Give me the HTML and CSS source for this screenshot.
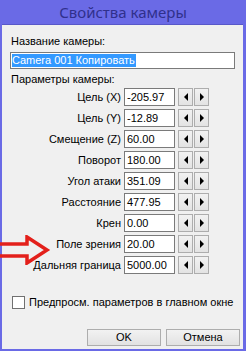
FILE: index.html
```html
<!DOCTYPE html>
<html lang="ru">
<head>
<meta charset="utf-8">
<link rel="stylesheet" href="styles.css">
</head>
<body>
<div class="window">
  <div class="title">Свойства камеры</div>
  <div class="client">
    <div class="label">Название камеры:</div>
    <div class="name-field"><span class="sel">Camera 001 Копировать</span></div>
    <div class="label params">Параметры камеры:</div>
    <div class="rows">
      <div class="row"><span class="rlabel">Цель (X)</span><span class="field">-205.97</span><span class="spin"><span class="tri left"></span></span><span class="spin"><span class="tri right"></span></span></div>
      <div class="row"><span class="rlabel">Цель (Y)</span><span class="field">-12.89</span><span class="spin"><span class="tri left"></span></span><span class="spin"><span class="tri right"></span></span></div>
      <div class="row"><span class="rlabel">Смещение (Z)</span><span class="field">60.00</span><span class="spin"><span class="tri left"></span></span><span class="spin"><span class="tri right"></span></span></div>
      <div class="row"><span class="rlabel">Поворот</span><span class="field">180.00</span><span class="spin"><span class="tri left"></span></span><span class="spin"><span class="tri right"></span></span></div>
      <div class="row"><span class="rlabel">Угол атаки</span><span class="field">351.09</span><span class="spin"><span class="tri left"></span></span><span class="spin"><span class="tri right"></span></span></div>
      <div class="row"><span class="rlabel">Расстояние</span><span class="field">477.95</span><span class="spin"><span class="tri left"></span></span><span class="spin"><span class="tri right"></span></span></div>
      <div class="row"><span class="rlabel">Крен</span><span class="field">0.00</span><span class="spin"><span class="tri left"></span></span><span class="spin"><span class="tri right"></span></span></div>
      <div class="row"><span class="rlabel">Поле зрения</span><span class="field">20.00</span><span class="spin"><span class="tri left"></span></span><span class="spin"><span class="tri right"></span></span></div>
      <div class="row"><span class="rlabel">Дальняя граница</span><span class="field">5000.00</span><span class="spin"><span class="tri left"></span></span><span class="spin"><span class="tri right"></span></span></div>
    </div>
    <div class="check"><span class="box"></span><span>Предпросм. параметров в главном окне</span></div>
    <div class="buttons"><span class="btn">OK</span><span class="btn">Отмена</span></div>
    <svg class="arrow" width="52" height="30" viewBox="0 0 52 30">
      <path d="M-4 9 H27 V2 L47 15 L27 28 V21 H-4 Z" fill="none" stroke="#e3201b" stroke-width="3.5" stroke-linejoin="miter"/>
    </svg>
  </div>
</div>
</body>
</html>
```
FILE: styles.css
```css
* { box-sizing: border-box; }
html, body { margin: 0; padding: 0; }
body {
  width: 246px;
  height: 351px;
  background: #6a6ae6;
  font-family: "Liberation Sans", Arial, sans-serif;
  font-size: 11px;
  color: #000;
  overflow: hidden;
}
.window {
  width: 246px;
  height: 351px;
  padding: 0 3px 2px 2px;
  display: flex;
  flex-direction: column;
}
.title {
  height: 24px;
  line-height: 24px;
  text-align: center;
  font-family: "Noto Sans", "Open Sans", sans-serif;
  font-size: 15px;
  color: #30308c;
  padding-left: 1px;
}
.client {
  position: relative;
  flex: 1;
  background: #f0f0f0;
  padding: 9px 0 0 0;
  border-top: 1px solid #5858c8;
}
.label {
  height: 14px;
  line-height: 14px;
  padding-left: 9px;
}
.name-field {
  margin: 4px 0 0 8px;
  width: 225px;
  height: 17px;
  border: 1px solid #7a7a7a;
  background: #fff;
  padding: 1px 0 0 1px;
}
.sel {
  display: inline-block;
  background: #3399ff;
  color: #fff;
  height: 13px;
  line-height: 13px;
  padding-right: 1px;
}
.params { margin-top: 3px; }
.rows {
  margin-top: 2px;
  display: flex;
  flex-direction: column;
  gap: 3px;
}
.row {
  display: flex;
  height: 18px;
  align-items: stretch;
}
.rlabel {
  width: 119px;
  text-align: right;
  line-height: 18px;
  margin-right: 3px;
}
.field {
  width: 51px;
  border: 1px solid #7a7a7a;
  background: #fff;
  line-height: 16px;
  padding-left: 2px;
  margin-right: 3px;
}
.spin {
  width: 15px;
  margin-right: 1px;
  background: linear-gradient(#f2f2f2, #e3e3e3);
  border: 1px solid #adadad;
  display: flex;
  align-items: center;
  justify-content: center;
}
.tri {
  width: 0;
  height: 0;
  border-top: 4px solid transparent;
  border-bottom: 4px solid transparent;
}
.tri.left { border-right: 4px solid #000; }
.tri.right { border-left: 4px solid #000; }
.check {
  margin-top: 21px;
  padding-left: 10px;
  display: flex;
  align-items: center;
  gap: 4px;
  height: 14px;
  line-height: 14px;
  white-space: nowrap;
}
.box {
  width: 13px;
  height: 13px;
  border: 1px solid #707070;
  background: #fff;
}
.buttons {
  margin-top: 20px;
  display: flex;
  justify-content: flex-end;
  gap: 5px;
  padding-right: 3px;
}
.btn {
  width: 74px;
  height: 17px;
  line-height: 15px;
  text-align: center;
  border: 1px solid #adadad;
  background: linear-gradient(#f2f2f2, #e2e2e2);
}
.arrow {
  position: absolute;
  left: -2px;
  top: 210px;
}
```
